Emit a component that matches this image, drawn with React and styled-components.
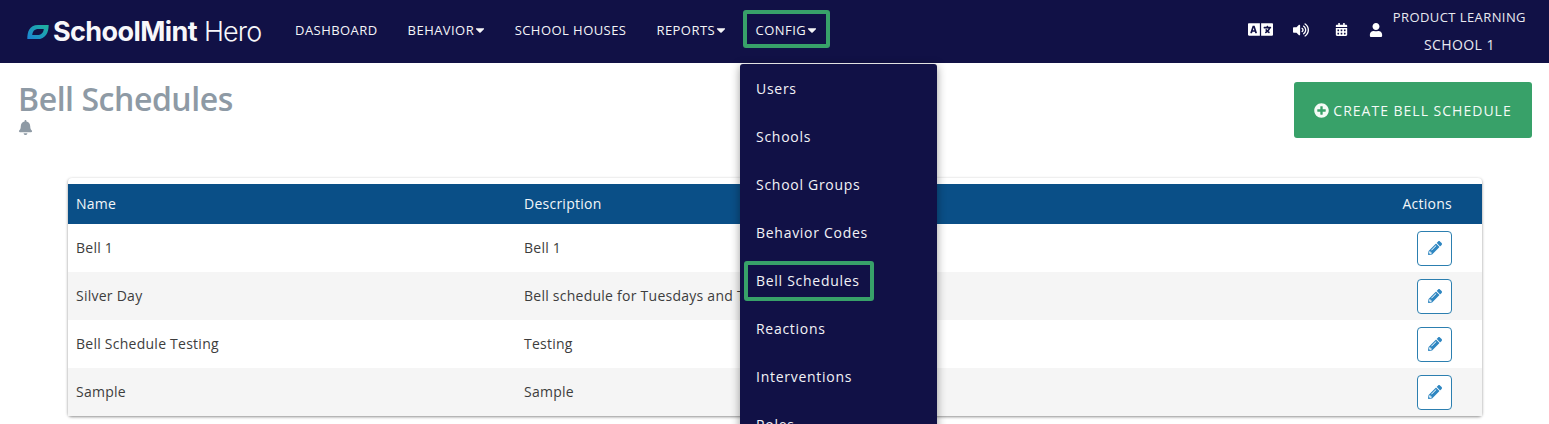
import React from "react";
import styled, { createGlobalStyle, css } from "styled-components";
import {
  FaBell,
  FaCalendarAlt,
  FaCaretDown,
  FaLanguage,
  FaPencilAlt,
  FaPlusCircle,
  FaUser,
  FaVolumeUp,
} from "react-icons/fa";

const GlobalStyle = createGlobalStyle`
  html, body {
    margin: 0;
    height: 424px;
    overflow: hidden;
    background: #fff;
    font-family: "Open Sans", "Liberation Sans", sans-serif;
  }
`;

const Page = styled.div`
  position: relative;
  width: 1549px;
  height: 424px;
  overflow: hidden;
`;

const Header = styled.header`
  display: flex;
  align-items: center;
  height: 63px;
  padding: 0 23px 4px 26px;
  background: #111146;
  color: #fff;
  box-sizing: border-box;
`;

const Logo = styled.div`
  display: flex;
  align-items: center;
  width: 269px;
  margin-top: 4px;
  flex-shrink: 0;
`;

const LogoText = styled.span`
  margin-left: 3px;
  font-family: Inter, "Liberation Sans", sans-serif;
  font-size: 27px;
  font-weight: 700;
  letter-spacing: -0.6px;
  color: #f7f7fa;
`;

const LogoLight = styled.span`
  font-weight: 300;
  margin-left: 7px;
  letter-spacing: -0.9px;
`;

const Nav = styled.nav`
  display: flex;
  align-items: center;
  gap: 30px;
`;

const Highlight = css`
  &::after {
    content: "";
    position: absolute;
    border: 4px solid #38a169;
    border-radius: 3px;
    pointer-events: none;
  }
`;

const NavItem = styled.div`
  position: relative;
  display: flex;
  align-items: center;
  font-size: 13px;
  font-weight: 500;
  letter-spacing: 0.45px;
  line-height: 20px;
  color: #f5f5f8;
  ${(p) => p.$boxed && Highlight}
  ${(p) => p.$boxed && css`
    &::after {
      left: -13px;
      right: -13px;
      top: -10px;
      bottom: -8px;
    }
  `}
`;

const Caret = styled(FaCaretDown)`
  width: 10px;
  height: 14px;
  margin-left: 0.5px;
`;

const Tools = styled.div`
  display: flex;
  align-items: center;
  margin-left: auto;
`;

const ToolIcon = styled.span`
  display: flex;
  align-items: center;
  justify-content: center;
  width: ${(p) => p.$width}px;
  font-size: ${(p) => p.$size}px;
`;

const UserBlock = styled.div`
  display: flex;
  flex-direction: column;
  align-items: center;
  margin: 2px 0 0 3px;
  font-weight: 500;
  line-height: 27px;
  color: #e9e9f0;
`;

const UserLine = styled.span`
  font-size: ${(p) => p.$size}px;
  letter-spacing: 0.42px;
`;

const TitleRow = styled.div`
  display: flex;
  justify-content: space-between;
  align-items: flex-start;
  padding: 18px 17px 0 18px;
`;

const Title = styled.h1`
  margin: 0;
  font-size: 32px;
  font-weight: 600;
  line-height: 36px;
  letter-spacing: -0.45px;
  color: #8e9aa5;
`;

const BellRow = styled.div`
  margin-top: 3px;
  font-size: 15px;
  line-height: 15px;
  color: #8e9aa5;
`;

const CreateButton = styled.button`
  display: flex;
  align-items: center;
  justify-content: center;
  gap: 4px;
  width: 238px;
  height: 56px;
  margin-top: 1px;
  border: none;
  border-radius: 3px;
  background: #38a169;
  color: #f4faf6;
  font-family: inherit;
  font-size: 14px;
  font-weight: 500;
  letter-spacing: 1px;
`;

const Card = styled.div`
  margin: 40px 67px 0 68px;
  padding-top: 6px;
  border-radius: 4px;
  background: #fff;
  box-shadow: 0 1px 3px rgba(0, 0, 0, 0.45);
`;

const Row = styled.div`
  display: grid;
  grid-template-columns: 448px 1fr 112px;
  align-items: center;
  height: ${(p) => (p.$head ? 40 : 48)}px;
  background: ${(p) => (p.$head ? "#0a4f87" : p.$odd ? "#f5f5f5" : "#fff")};
  color: ${(p) => (p.$head ? "#f2f6f9" : "#3d3d3d")};
  font-size: 14px;
  font-weight: ${(p) => (p.$head ? 500 : 400)};
  letter-spacing: 0.25px;
`;

const Cell = styled.div`
  padding: 0 0 2px 8px;
  white-space: nowrap;
`;

const ActionCell = styled.div`
  display: flex;
  justify-content: flex-end;
  padding-right: 30px;
`;

const HeadAction = styled.span`
  padding-bottom: 2px;
`;

const EditButton = styled.button`
  display: flex;
  align-items: center;
  justify-content: center;
  width: 35px;
  height: 35px;
  padding: 0;
  border: 1px solid #2c7fb0;
  border-radius: 4px;
  background: #fff;
  color: #2e86c1;
  font-size: 14px;
`;

const Dropdown = styled.div`
  position: absolute;
  left: 740px;
  top: 64px;
  width: 197px;
  height: 380px;
  padding-top: 1px;
  border-radius: 3px 3px 0 0;
  background: #111146;
  box-shadow: 0 2px 10px rgba(0, 0, 0, 0.4);
`;

const MenuItem = styled.div`
  position: relative;
  display: flex;
  align-items: center;
  width: fit-content;
  height: 48px;
  margin-left: 16px;
  padding-bottom: 2px;
  box-sizing: border-box;
  font-size: 14px;
  font-weight: 500;
  letter-spacing: 0.72px;
  color: #f3f3f7;
  ${(p) => p.$boxed && Highlight}
  ${(p) => p.$boxed && css`
    &::after {
      left: -12px;
      right: -14px;
      top: 4px;
      bottom: 4px;
    }
  `}
`;

const navItems = [
  { label: "DASHBOARD" },
  { label: "BEHAVIOR", caret: true },
  { label: "SCHOOL HOUSES" },
  { label: "REPORTS", caret: true },
  { label: "CONFIG", caret: true, boxed: true },
];

const rows = [
  { name: "Bell 1", description: "Bell 1" },
  { name: "Silver Day", description: "Bell schedule for Tuesdays and Thursdays" },
  { name: "Bell Schedule Testing", description: "Testing" },
  { name: "Sample", description: "Sample" },
];

const menu = [
  "Users",
  "Schools",
  "School Groups",
  "Behavior Codes",
  "Bell Schedules",
  "Reactions",
  "Interventions",
  "Roles",
];

const LogoMark = () => (
  <svg width="24" height="16" viewBox="0 0 26 18">
    <defs>
      <linearGradient id="leaf" x1="0" y1="1" x2="1" y2="0">
        <stop offset="0" stopColor="#1b84d8" />
        <stop offset="1" stopColor="#1fb39a" />
      </linearGradient>
    </defs>
    <path
      fillRule="evenodd"
      fill="url(#leaf)"
      d="M1 17C1 9 3 1 13 1H25C25 9 22 17 12 17ZM6.5 12.5H12C16.5 12.5 19 10 19.5 5.5H13.5C9 5.5 7 8 6.5 12.5Z"
    />
  </svg>
);

const App = () => (
  <Page>
    <GlobalStyle />
    <Header>
      <Logo>
        <LogoMark />
        <LogoText>
          SchoolMint<LogoLight>Hero</LogoLight>
        </LogoText>
      </Logo>
      <Nav>
        {navItems.map((item) => (
          <NavItem key={item.label} $boxed={item.boxed}>
            {item.label}
            {item.caret && <Caret />}
          </NavItem>
        ))}
      </Nav>
      <Tools>
        <ToolIcon $width={40} $size={25}><FaLanguage /></ToolIcon>
        <ToolIcon $width={40} $size={16}><FaVolumeUp /></ToolIcon>
        <ToolIcon $width={41} $size={13}><FaCalendarAlt /></ToolIcon>
        <ToolIcon $width={28} $size={14}><FaUser /></ToolIcon>
        <UserBlock>
          <UserLine $size={13}>PRODUCT LEARNING</UserLine>
          <UserLine $size={14}>SCHOOL 1</UserLine>
        </UserBlock>
      </Tools>
    </Header>

    <TitleRow>
      <div>
        <Title>Bell Schedules</Title>
        <BellRow><FaBell /></BellRow>
      </div>
      <CreateButton>
        <FaPlusCircle size={15} />
        CREATE BELL SCHEDULE
      </CreateButton>
    </TitleRow>

    <Card>
      <Row $head>
        <Cell>Name</Cell>
        <Cell>Description</Cell>
        <ActionCell><HeadAction>Actions</HeadAction></ActionCell>
      </Row>
      {rows.map((row, i) => (
        <Row key={row.name} $odd={i % 2 === 1}>
          <Cell>{row.name}</Cell>
          <Cell>{row.description}</Cell>
          <ActionCell>
            <EditButton><FaPencilAlt /></EditButton>
          </ActionCell>
        </Row>
      ))}
    </Card>

    <Dropdown>
      {menu.map((label) => (
        <MenuItem key={label} $boxed={label === "Bell Schedules"}>
          {label}
        </MenuItem>
      ))}
    </Dropdown>
  </Page>
);

export default App;
